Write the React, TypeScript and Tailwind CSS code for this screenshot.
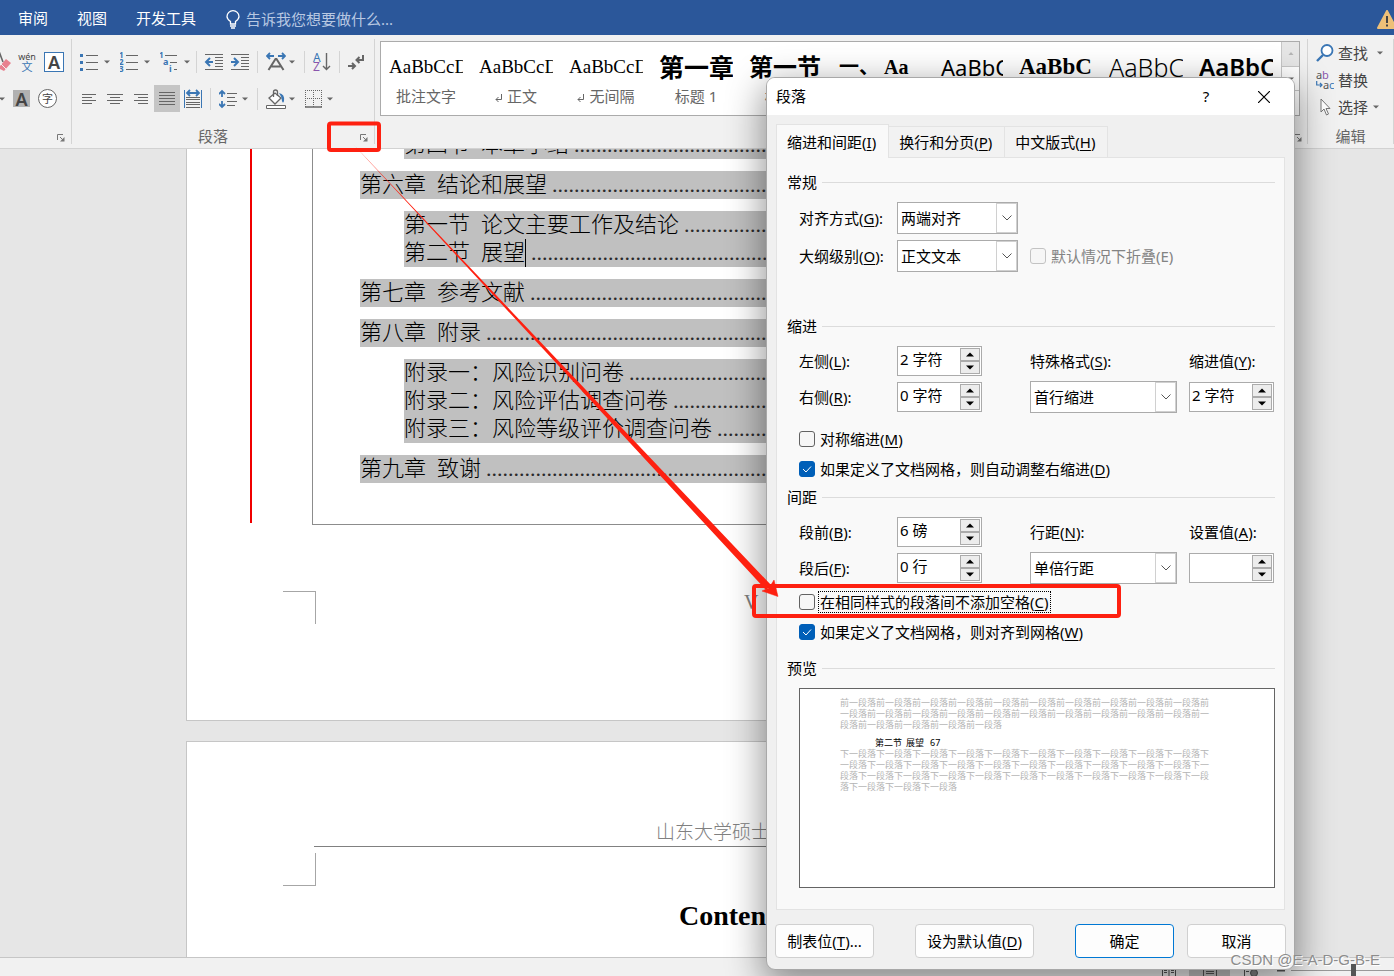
import { useState, type ReactNode } from "react";

const menuTabs = ["审阅", "视图", "开发工具"];

const serif = "font-['Liberation_Serif','Noto_Sans_CJK_SC',serif]";

const styleItems = [
  { preview: "AaBbCcDd", label: "批注文字", className: "font-['Liberation_Serif',serif] text-[19px]" },
  { preview: "AaBbCcDd", label: "正文", mark: true, className: "font-['Liberation_Serif',serif] text-[19px]" },
  { preview: "AaBbCcDd", label: "无间隔", mark: true, className: "font-['Liberation_Serif',serif] text-[19px]" },
  { preview: "第一章", label: "标题 1", className: "text-[25px] font-bold" },
  { preview: "第一节", label: "标题 2", className: "text-2xl font-bold" },
  { preview: "一、 Aa", label: "标题 3", className: "font-['Liberation_Serif','Noto_Sans_CJK_SC',serif] text-xl font-bold" },
  { preview: "AaBbCc", label: "标题 4", className: "pl-3 text-[22px]" },
  { preview: "AaBbC", label: "标题 5", className: "font-['Liberation_Serif',serif] text-[23px] font-bold" },
  { preview: "AaBbCc", label: "标题 6", className: "text-[25px] font-light" },
  { preview: "AaBbCc", label: "标题 7", className: "text-2xl font-semibold" },
];

const tocGroups = [
  { level: 2, rows: [["第四节", "本章小结"]] },
  { level: 1, rows: [["第六章", "结论和展望"]] },
  { level: 2, rows: [["第一节", "论文主要工作及结论"], ["第二节", "展望"]] },
  { level: 1, rows: [["第七章", "参考文献"]] },
  { level: 1, rows: [["第八章", "附录"]] },
  { level: 2, rows: [["", "附录一：风险识别问卷"], ["", "附录二：风险评估调查问卷"], ["", "附录三：风险等级评价调查问卷"]] },
  { level: 1, rows: [["第九章", "致谢"]] },
];

/* ---------- Ribbon pieces ---------- */

function Caret() {
  return (
    <svg className="h-2 w-2 shrink-0" viewBox="0 0 8 8">
      <path d="M1 2.5h6L4 5.5z" fill="#666" />
    </svg>
  );
}

function Separator() {
  return <span className="mx-1 h-[22px] w-px bg-[#d4d4d4]" />;
}

function ToolButton({ label, active, children }: { label: string; active?: boolean; children: ReactNode }) {
  return (
    <button
      type="button"
      aria-label={label}
      className={`flex h-[27px] w-[26px] items-center justify-center ${active ? "bg-[#c5c5c5]" : ""}`}
    >
      <svg className="h-5 w-5" viewBox="0 0 20 20" fill="none" stroke="#666" strokeWidth="1">
        {children}
      </svg>
    </button>
  );
}

function SplitButton({ label, wide, children }: { label: string; wide?: boolean; children: ReactNode }) {
  return (
    <button
      type="button"
      aria-label={label}
      className={`flex h-[27px] items-center pl-1 ${wide ? "w-10 gap-[3px]" : "w-[38px] gap-0.5"}`}
    >
      <svg className="h-5 w-5" viewBox="0 0 20 20" fill="none" stroke="#666" strokeWidth="1">
        {children}
      </svg>
      <Caret />
    </button>
  );
}

function Launcher({ label }: { label: string }) {
  return (
    <button type="button" aria-label={label} className="flex h-3 w-3 items-center justify-center">
      <svg className="h-2 w-2" viewBox="0 0 8 8" fill="none" stroke="#777">
        <path d="M.5 6V.5H6" />
        <path d="M3 3l3 3" />
        <path d="M7.5 3v4.5H3z" fill="#777" stroke="none" />
      </svg>
    </button>
  );
}

function GlyphText({ x, y, size, fill, bold, children }: { x: number; y: number; size: number; fill: string; bold?: boolean; children: string }) {
  return (
    <text x={x} y={y} fontSize={size} fill={fill} stroke="none" fontWeight={bold ? 700 : 400}>
      {children}
    </text>
  );
}

function FontGroup() {
  return (
    <div className="flex w-[72px] shrink-0 flex-col border-r border-[#d4d4d4] pt-[9px]">
      <div className="flex h-[27px] items-center">
        <button type="button" aria-label="清除格式" className="w-[14px] overflow-hidden">
          <svg className="h-5 w-[14px]" viewBox="0 0 14 20">
            <path d="M-3 12L0 2l3 8" fill="none" stroke="#666" strokeWidth="1.6" />
            <path d="M0 14l6-7 5 4-7 8-4-2z" fill="#e8818f" />
            <path d="M1 12l5 5" stroke="#f1f1f1" />
          </svg>
        </button>
        <button type="button" aria-label="拼音指南" className="flex w-[26px] flex-col items-center">
          <span className="text-[9px] leading-[9px] text-[#444]">wén</span>
          <span className="text-[11px] leading-[11px] text-[#3a76b4]">文</span>
        </button>
        <button
          type="button"
          aria-label="字符边框"
          className="ml-1 flex h-5 w-5 items-center justify-center border border-[#3a76b4] bg-white text-lg leading-none font-semibold text-[#444]"
        >
          A
        </button>
      </div>
      <div className="mt-[10px] flex h-[27px] items-center">
        <button type="button" aria-label="字体颜色" className="w-[13px]">
          <svg className="h-2 w-2" viewBox="0 0 8 8">
            <path d="M-1 2.5h6L2 5.5z" fill="#666" />
          </svg>
        </button>
        <button
          type="button"
          aria-label="字符底纹"
          className="flex h-[17px] w-[17px] items-center justify-center bg-[#b1b1b1] text-lg leading-none font-semibold text-[#444]"
        >
          A
        </button>
        <button
          type="button"
          aria-label="带圈字符"
          className="ml-2 flex h-[19px] w-[19px] items-center justify-center rounded-full border border-[#666] bg-white text-[11px] leading-none text-[#444]"
        >
          字
        </button>
      </div>
      <div className="mt-4 flex h-4 items-center justify-end pt-1 pr-1">
        <Launcher label="字体设置" />
      </div>
    </div>
  );
}

function ParagraphGroup() {
  return (
    <div className="flex w-[303px] shrink-0 flex-col border-r border-[#d4d4d4] pt-[9px] pl-1">
      <div className="flex h-[27px] items-center">
        <SplitButton label="项目符号" wide>
          <path d="M6 3.5h12M6 10.5h12M6 17.5h12" />
          <path d="M0 2h3v3H0zM0 9h3v3H0zM0 16h3v3H0z" fill="#3a76b4" stroke="none" />
        </SplitButton>
        <SplitButton label="编号" wide>
          <path d="M6 3.5h12M6 10.5h12M6 17.5h12" />
          <GlyphText x={-1} y={6} size={8} fill="#3a76b4" bold>1</GlyphText>
          <GlyphText x={-1} y={13} size={8} fill="#3a76b4" bold>2</GlyphText>
          <GlyphText x={-1} y={20} size={8} fill="#3a76b4" bold>3</GlyphText>
        </SplitButton>
        <SplitButton label="多级列表" wide>
          <path d="M5 3.5h12M10 10.5h7M14 17.5h3" />
          <GlyphText x={-1} y={6} size={8} fill="#3a76b4" bold>1</GlyphText>
          <GlyphText x={3} y={13} size={9} fill="#3a76b4" bold>a</GlyphText>
          <GlyphText x={9} y={20} size={9} fill="#3a76b4" bold>i</GlyphText>
        </SplitButton>
        <span className="mr-1 h-[22px] w-px bg-[#d4d4d4]" />
        <ToolButton label="减少缩进量">
          <path d="M1 2.5h18M11 5.5h8M11 8.5h8M11 11.5h8M11 14.5h8M1 17.5h18" />
          <path d="M9 10H3M6 6l-4 4 4 4" stroke="#3a76b4" strokeWidth="2" />
        </ToolButton>
        <ToolButton label="增加缩进量">
          <path d="M1 2.5h18M11 5.5h8M11 8.5h8M11 11.5h8M11 14.5h8M1 17.5h18" />
          <path d="M1 10h6M4 6l4 4-4 4" stroke="#3a76b4" strokeWidth="2" />
        </ToolButton>
        <Separator />
        <SplitButton label="中文版式">
          <path d="M2.500 18L9.500 7h1l7 11M5.500 14.500h9" strokeWidth="2" />
          <path d="M1 4h7M4 1L1 4l3 3M19 4h-7M16 1l3 3-3 3" stroke="#3a76b4" strokeWidth="1.800" />
        </SplitButton>
        <Separator />
        <ToolButton label="排序">
          <GlyphText x={1} y={10} size={12} fill="#3a76b4">A</GlyphText>
          <GlyphText x={1} y={19} size={12} fill="#8a56ad">Z</GlyphText>
          <path d="M14.500 1v16M11 14l3.500 3.500L18 14" strokeWidth="1.400" />
        </ToolButton>
        <Separator />
        <ToolButton label="显示编辑标记">
          <path d="M16 3v5h-6M12.500 5L9.500 8l3 3M1 14h7M5 11l3 3-3 3" strokeWidth="2" />
        </ToolButton>
      </div>
      <div className="mt-[10px] flex h-[27px] items-center">
        <ToolButton label="左对齐">
          <path d="M3 5.500h14M3 8.500h10M3 11.500h14M3 14.500h10" />
        </ToolButton>
        <ToolButton label="居中">
          <path d="M2 5.500h16M5 8.500h10M2 11.500h16M5 14.500h10" />
        </ToolButton>
        <ToolButton label="右对齐">
          <path d="M3 5.500h14M7 8.500h10M3 11.500h14M7 14.500h10" />
        </ToolButton>
        <ToolButton label="两端对齐" active>
          <path d="M2 3.500h16M2 6.500h16M2 9.500h16M2 12.500h16M2 15.500h16" />
        </ToolButton>
        <ToolButton label="分散对齐">
          <path d="M1.500 1v18M18.500 1v18" stroke="#3a76b4" />
          <path d="M3 8.500h14M3 10.500h14M3 13.500h14M3 15.500h14M3 18.500h14" />
          <path d="M4 4h12M7 1L4 4l3 3M13 1l3 3-3 3" stroke="#3a76b4" strokeWidth="1.800" />
        </ToolButton>
        <Separator />
        <SplitButton label="行和段落间距">
          <path d="M8 4.500h10M8 8.500h8M8 12.500h10M8 16.500h8" />
          <path d="M3 2v6M0 5l3-3 3 3M3 18v-6M0 15l3 3 3-3" stroke="#3a76b4" strokeWidth="1.800" />
        </SplitButton>
        <Separator />
        <SplitButton label="底纹">
          <path d="M3 9l6-5 6 5-6 6z" fill="#fff" strokeWidth="1.300" />
          <path d="M7.500 8V3q0-2 2-2t2 2v4" strokeWidth="1.300" />
          <path d="M13 4q6 1 5 8-1 3-2 0 0-4-3-8z" fill="#3a76b4" stroke="none" />
          <path d="M.5 16.500h19v3H.5z" fill="#fff" />
        </SplitButton>
        <SplitButton label="边框">
          <path d="M1.500 1v17M9.500 1v17M17.500 1v17M1 1.500h17M1 9.500h17" strokeDasharray="1 1" />
          <path d="M1 18h17" strokeWidth="1.500" />
        </SplitButton>
      </div>
      <div className="mt-4 flex h-4 items-center pr-1">
        <span className="flex-1 pr-2 text-center text-[15px] leading-4 text-[#666]">段落</span>
        <span className="pt-1"><Launcher label="段落设置" /></span>
      </div>
    </div>
  );
}

function StylesGroup() {
  return (
    <div className="flex min-w-0 flex-1 flex-col border-r border-[#d4d4d4] pt-0.5 pr-[7px] pl-[5px]">
      <div className="flex h-[75px] shrink-0 border border-[#ababab] bg-white">
        <div className="flex min-w-0 flex-1 overflow-hidden">
          {styleItems.map((item) => (
            <button key={item.label} type="button" className="flex w-[90px] shrink-0 flex-col px-2 pt-2">
              <span className={`h-9 w-full overflow-hidden text-left leading-[34px] whitespace-pre text-black ${item.className}`}>
                {item.preview}
              </span>
              <span className="flex h-5 w-full items-center justify-center gap-1 text-[15px] leading-5 text-[#666]">
                {item.mark && (
                  <svg className="mt-1 h-2 w-2" viewBox="0 0 8 8" fill="none" stroke="#666">
                    <path d="M6.500 0v5.500H1M3.500 3L1 5.500 3.500 8" />
                  </svg>
                )}
                {item.label}
              </span>
            </button>
          ))}
        </div>
        <div className="flex w-[18px] flex-col divide-y divide-[#c6c6c6] border-l border-[#c6c6c6]">
          <button type="button" aria-label="上一行" className="flex flex-1 items-center justify-center bg-[#e6e6e6]">
            <svg className="h-2 w-2" viewBox="0 0 8 8"><path d="M1.500 5h5L4 2z" fill="#b5b5b5" /></svg>
          </button>
          <button type="button" aria-label="下一行" className="flex flex-1 items-center justify-center">
            <Caret />
          </button>
          <button type="button" aria-label="其他样式" className="flex flex-1 items-center justify-center">
            <Caret />
          </button>
        </div>
      </div>
      <div className="mt-3 -mr-1 flex h-4 items-center justify-end pt-1">
        <Launcher label="样式窗格" />
      </div>
    </div>
  );
}

function EditingGroup() {
  return (
    <div className="flex w-[86px] shrink-0 flex-col border-r border-[#d4d4d4] pl-2 text-[15px] text-[#444]">
      <button type="button" className="flex h-[27px] items-center gap-1 leading-5">
        <svg className="h-[18px] w-[18px]" viewBox="0 0 18 18" fill="none" stroke="#3a76b4">
          <circle cx="11" cy="6.500" r="5.500" strokeWidth="1.800" fill="#fff" />
          <path d="M7 11l-6 6" strokeWidth="2.400" />
        </svg>
        查找
        <span className="ml-1"><Caret /></span>
      </button>
      <button type="button" className="flex h-[27px] items-center gap-1 leading-5">
        <svg className="h-[18px] w-[18px]" viewBox="0 0 18 18" fontSize="11">
          <text x="0" y="8" fill="#555">a</text>
          <text x="6" y="8" fill="#8a56ad">b</text>
          <text x="7" y="18" fill="#555">a</text>
          <text x="13" y="18" fill="#3a76b4">c</text>
          <path d="M.7 10v4H6M4 12l2 2-2 2" fill="none" stroke="#3a76b4" strokeWidth="1.200" />
        </svg>
        替换
      </button>
      <button type="button" className="flex h-[27px] items-center gap-1 leading-5">
        <svg className="h-[18px] w-[18px]" viewBox="0 0 18 18">
          <path d="M5 1v13l3-3 2.500 6 2-1-2.500-5.500h4z" fill="#fff" stroke="#777" />
        </svg>
        选择
        <Caret />
      </button>
      <div className="mt-2 h-4 pr-2 text-center leading-4 text-[#666]">编辑</div>
    </div>
  );
}

/* ---------- Document ---------- */

function TocRow({ no, title, cursor }: { no: string; title: string; cursor: boolean }) {
  return (
    <div className="flex h-7 items-center overflow-hidden whitespace-nowrap">
      {no && <span className="mr-[11px]">{no}</span>}
      <span className={cursor ? "border-r border-black" : ""}>{title}</span>
      <span className="ml-[5px] min-w-0 flex-1 overflow-hidden text-[#2a2a2a]">{".".repeat(100)}</span>
    </div>
  );
}

function DocumentArea() {
  return (
    <main className={`min-h-0 flex-1 overflow-hidden bg-[#e6e6e6] pl-[186px] ${serif}`}>
      <section className="h-[572px] w-[1094px] border border-t-0 border-[#c6c6c6] bg-white">
        <div className="flex h-[376px]">
          <div className="ml-[63px] h-[374px] w-0.5 bg-[#f00000]" />
          <div className="mr-[126px] ml-[60px] flex min-w-0 flex-1 flex-col justify-end gap-3 overflow-hidden border-b border-l border-[#8c8c8c] pb-[41px] text-[22px] leading-[30px] font-light text-black">
            {tocGroups.map((group) => (
              <div key={group.rows[0][1]} className={`bg-[#c0c0c0] ${group.level === 1 ? "ml-[47px]" : "ml-[91px]"}`}>
                {group.rows.map(([no, title]) => (
                  <TocRow key={title} no={no} title={title} cursor={title === "展望"} />
                ))}
              </div>
            ))}
          </div>
        </div>
        <div className="mt-[66px] flex items-start">
          <span className="ml-24 h-[33px] w-[33px] border-t border-r border-[#a6a6a6]" />
          <span className="ml-[428px] text-xl leading-[22px] text-[#808080]">V</span>
        </div>
      </section>
      <section className="mt-5 h-[572px] w-[1094px] border border-[#c6c6c6] bg-white pt-[78px]">
        <div className="mr-[126px] ml-[127px] border-b border-[#808080] pl-[342px] text-[19px] leading-[26px] font-light whitespace-nowrap text-[#808080]">
          山东大学硕士
        </div>
        <span className="mt-[6px] ml-24 block h-[33px] w-[33px] border-r border-b border-[#a6a6a6]" />
        <h1 className="mt-3 pl-[492px] text-[28px] leading-9 font-bold text-black">Contents</h1>
      </section>
    </main>
  );
}

/* ---------- Dialog ---------- */

// Label text followed by its underlined access key
function Keyed({ text, k, tail = "" }: { text: string; k: string; tail?: string }) {
  return (
    <>
      {text}(<span className="underline underline-offset-2">{k}</span>){tail}
    </>
  );
}

function Heading({ children, className = "" }: { children: string; className?: string }) {
  return (
    <div className={`flex h-5 items-center gap-[5px] ${className}`}>
      <h3>{children}</h3>
      <span className="h-px flex-1 bg-[#dcdcdc]" />
    </div>
  );
}

function Dropdown({ id, options, className }: { id: string; options: string[]; className: string }) {
  return (
    <div className={`flex h-8 border border-[#ababab] bg-white ${className}`}>
      <select id={id} className="min-w-0 flex-1 appearance-none bg-white pl-[3px] outline-none">
        {options.map((option) => (
          <option key={option}>{option}</option>
        ))}
      </select>
      <span className="pointer-events-none flex w-[21px] items-center justify-center border border-[#d0d0d0]">
        <svg className="h-[10px] w-[10px]" viewBox="0 0 10 10" fill="none" stroke="#555">
          <path d="M.5 2.500L5 7l4.500-4.500" />
        </svg>
      </span>
    </div>
  );
}

function Spinner({ id, value }: { id: string; value: string }) {
  return (
    <div className="flex h-[30px] w-[85px] border border-[#ababab] bg-white p-px">
      <input id={id} type="text" defaultValue={value} className="w-0 min-w-0 flex-1 bg-white pb-1 pl-px outline-none" />
      <div className="flex w-5 flex-col">
        <button type="button" aria-label="增加" className="flex flex-1 items-center justify-center border border-[#ababab] bg-[#ececec]">
          <svg className="h-[5px] w-2" viewBox="0 0 8 5"><path d="M0 4.500h8L4 .5z" fill="#000" /></svg>
        </button>
        <button type="button" aria-label="减少" className="flex flex-1 items-center justify-center border border-[#ababab] bg-[#ececec]">
          <svg className="h-[5px] w-2" viewBox="0 0 8 5"><path d="M0 .5h8L4 4.500z" fill="#000" /></svg>
        </button>
      </div>
    </div>
  );
}

function Check({ checked = false, disabled, focused, children }: { checked?: boolean; disabled?: boolean; focused?: boolean; children: ReactNode }) {
  const [on, setOn] = useState(checked);
  return (
    <label className={`flex h-5 items-center ${disabled ? "text-[#838383]" : ""}`}>
      <span className="relative flex h-4 w-4">
        <input
          type="checkbox"
          checked={on}
          disabled={disabled}
          onChange={() => setOn(!on)}
          className="h-4 w-4 appearance-none rounded-[3px] border border-[#626262] bg-[#f6f6f6] checked:border-[#005fb8] checked:bg-[#005fb8] disabled:border-[#c3c3c3]"
        />
        {on && (
          <svg className="pointer-events-none absolute inset-0 h-4 w-4" viewBox="0 0 16 16" fill="none" stroke="#fff">
            <path d="M4 8l3 3 5-5.500" />
          </svg>
        )}
      </span>
      <span className={`ml-[3px] border border-dotted px-px leading-5 ${focused ? "border-black" : "border-transparent"}`}>{children}</span>
    </label>
  );
}

const dialogTabs = [
  { text: "缩进和间距", k: "I" },
  { text: "换行和分页", k: "P" },
  { text: "中文版式", k: "H" },
];

function ParagraphDialog() {
  const [tab, setTab] = useState("I");

  return (
    <div
      role="dialog"
      aria-label="段落"
      className="absolute top-[77px] right-[99px] w-[529px] overflow-hidden rounded-[9px] border border-[#a8a8a8] bg-[#f0f0f0] pb-[11px] text-[15px] leading-5 text-black"
    >
      <div className="flex h-[37px] items-center bg-white pl-[9px]">
        <h2 className="flex-1 pb-0.5">段落</h2>
        <button type="button" aria-label="帮助" className="w-[56px] pb-0.5">?</button>
        <button type="button" aria-label="关闭" className="flex h-full w-[60px] items-center justify-center">
          <svg className="h-3 w-3" viewBox="0 0 12 12" stroke="#000" strokeWidth="1.200">
            <path d="M0 0l12 12M12 0L0 12" />
          </svg>
        </button>
      </div>

      <div className="px-[9px] pt-[9px]">
        <div role="tablist" className="flex items-end">
          {dialogTabs.map((t) => (
            <button
              key={t.k}
              type="button"
              role="tab"
              aria-selected={tab === t.k}
              onClick={() => setTab(t.k)}
              className={
                tab === t.k
                  ? "relative -mb-px h-[34px] border border-b-0 border-[#e3e3e3] bg-[#f9f9f9] pr-3 pl-[10px]"
                  : "h-[31px] border border-b-0 border-l-0 border-[#e3e3e3] bg-[#f2f2f2] pr-3 pl-[10px]"
              }
            >
              <Keyed text={t.text} k={t.k} />
            </button>
          ))}
        </div>

        <div className="border border-[#e3e3e3] bg-[#f9f9f9] pt-[14px] pr-[9px] pb-[21px] pl-[10px]">
          <Heading>常规</Heading>
          <div className="mt-[10px] flex flex-col gap-[6px] pl-3">
            <div className="flex items-center">
              <label htmlFor="align" className="w-[98px]"><Keyed text="对齐方式" k="G" tail=":" /></label>
              <Dropdown id="align" options={["两端对齐", "左对齐", "居中"]} className="w-[121px]" />
            </div>
            <div className="flex items-center">
              <label htmlFor="outline" className="w-[98px]"><Keyed text="大纲级别" k="O" tail=":" /></label>
              <Dropdown id="outline" options={["正文文本", "1 级", "2 级"]} className="mr-3 w-[121px]" />
              <Check disabled>默认情况下折叠(E)</Check>
            </div>
          </div>

          <Heading className="mt-11">缩进</Heading>
          <div className="mt-[9px] grid grid-cols-[98px_133px_159px_85px] grid-rows-[32px_32px] items-center gap-y-1 pl-3">
            <label htmlFor="left"><Keyed text="左侧" k="L" tail=":" /></label>
            <Spinner id="left" value="2 字符" />
            <label htmlFor="special"><Keyed text="特殊格式" k="S" tail=":" /></label>
            <label htmlFor="indent"><Keyed text="缩进值" k="Y" tail=":" /></label>
            <label htmlFor="right"><Keyed text="右侧" k="R" tail=":" /></label>
            <Spinner id="right" value="0 字符" />
            <Dropdown id="special" options={["首行缩进", "悬挂缩进"]} className="w-[147px]" />
            <Spinner id="indent" value="2 字符" />
          </div>
          <div className="mt-4 flex flex-col gap-[10px] pl-3">
            <Check><Keyed text="对称缩进" k="M" /></Check>
            <Check checked><Keyed text="如果定义了文档网格，则自动调整右缩进" k="D" /></Check>
          </div>

          <Heading className="mt-2">间距</Heading>
          <div className="mt-[9px] grid grid-cols-[98px_133px_159px_85px] grid-rows-[32px_32px] items-center gap-y-1 pl-3">
            <label htmlFor="before"><Keyed text="段前" k="B" tail=":" /></label>
            <Spinner id="before" value="6 磅" />
            <label htmlFor="spacing"><Keyed text="行距" k="N" tail=":" /></label>
            <label htmlFor="at"><Keyed text="设置值" k="A" tail=":" /></label>
            <label htmlFor="after"><Keyed text="段后" k="F" tail=":" /></label>
            <Spinner id="after" value="0 行" />
            <Dropdown id="spacing" options={["单倍行距", "1.5 倍行距"]} className="w-[147px]" />
            <Spinner id="at" value="" />
          </div>
          <div className="mt-2 flex flex-col gap-[10px] pl-3">
            <Check focused><Keyed text="在相同样式的段落间不添加空格" k="C" /></Check>
            <Check checked><Keyed text="如果定义了文档网格，则对齐到网格" k="W" /></Check>
          </div>

          <Heading className="mt-4">预览</Heading>
          <div className="mt-[10px] ml-3 h-[200px] border border-[#646464] bg-white pt-2 pl-10 text-[9px] leading-[11px] text-[#b4b4b4]">
            <p className="w-[371px] break-all">{"前一段落".repeat(25)}</p>
            <p className="mt-[7px] flex gap-1 pl-[35px] text-black">
              <span>第二节</span>
              <span>展望</span>
              <span className="ml-0.5">67</span>
            </p>
            <p className="w-[371px] break-all">{"下一段落".repeat(34)}</p>
          </div>
        </div>

        <div className="mt-[14px] -mr-px -ml-px flex">
          <button type="button" className="h-[34px] w-[99px] rounded border border-[#d0d0d0] bg-[#fdfdfd]">
            <Keyed text="制表位" k="T" tail="..." />
          </button>
          <button type="button" className="ml-[41px] h-[34px] w-[119px] rounded border border-[#d0d0d0] bg-[#fdfdfd]">
            <Keyed text="设为默认值" k="D" />
          </button>
          <button type="button" className="ml-auto h-[34px] w-[99px] rounded border border-[#0078d4] bg-[#fdfdfd]">确定</button>
          <button type="button" className="ml-[13px] h-[34px] w-[99px] rounded border border-[#d0d0d0] bg-[#fdfdfd]">取消</button>
        </div>
      </div>
    </div>
  );
}

/* Red call-outs that link the launcher to the check box */
function Annotations() {
  return (
    <svg className="pointer-events-none absolute top-0 left-0 h-[700px] w-[1200px]" fill="none" stroke="#fe2010">
      <rect x="329" y="123.500" width="50" height="26.500" rx="2" strokeWidth="4" />
      <rect x="754" y="586" width="365" height="30" rx="2" strokeWidth="4" />
      <path d="M353 144L541 342.500 621.500 427.500 771 585 766 590 618.500 430.500 539 344.500z" fill="#fe2010" stroke="none" />
      <path d="M778 596.500L762 591l7-3 5-8z" fill="#fe2010" stroke="#fe2010" strokeWidth="0.500" />
    </svg>
  );
}

export default function App() {
  return (
    <div className="relative flex h-screen flex-col overflow-hidden bg-[#f1f1f1] font-['Noto_Sans','Noto_Sans_CJK_SC',sans-serif]">
      <header className="flex h-[35px] shrink-0 items-center overflow-hidden bg-[#2b579a] pl-[18px] text-[15px] leading-5 text-white">
        <nav className="flex gap-[29px]">
          {menuTabs.map((name) => (
            <button key={name} type="button">{name}</button>
          ))}
        </nav>
        <label className="ml-[30px] flex flex-1 items-center gap-[6px]">
          <svg className="mt-1 h-[19px] w-[14px]" viewBox="0 0 14 19" fill="none" stroke="#fff" strokeWidth="1.300">
            <path d="M4.500 14v-2.500Q1 9 1 6.500A6 5.800 0 0 1 13 6.500Q13 9 9.500 11.500V14z" />
            <path d="M4 16h6M5 18h4" />
          </svg>
          <input
            type="text"
            aria-label="操作说明搜索"
            placeholder="告诉我您想要做什么..."
            className="mt-0.5 w-[200px] bg-transparent outline-none placeholder:text-[#b8c8e2]"
          />
        </label>
        <svg className="mt-1 -mr-[3px] h-5 w-5" viewBox="0 0 20 20">
          <path d="M10 1L19 18H1z" fill="#eec078" stroke="#eec078" strokeLinejoin="round" strokeWidth="2" />
          <path d="M10 6v7M10 14.500v2" stroke="#444" strokeWidth="2" />
        </svg>
      </header>

      <div className="flex h-[114px] shrink-0 border-b border-[#d2d2d2] py-1">
        <FontGroup />
        <ParagraphGroup />
        <StylesGroup />
        <EditingGroup />
      </div>

      <DocumentArea />

      <footer className="flex h-[19px] shrink-0 items-start justify-end overflow-hidden border-t border-[#c6c6c6] bg-[#f1f1f1]">
        <button type="button" aria-label="阅读视图" className="flex w-[41px] justify-center pt-2">
          <svg className="h-3 w-[14px]" viewBox="0 0 14 12" fill="none" stroke="#555">
            <path d="M.5 1.500h5l1.500 1 1.500-1h5v9h-5L7 12l-1.500-1.500h-5zM7 2v10M2 4.500h3M2 6.500h3M9 4.500h3M9 6.500h3" />
          </svg>
        </button>
        <button type="button" aria-label="页面视图" className="flex h-[19px] w-[41px] justify-center bg-[#c5c5c5] pt-2">
          <svg className="h-3 w-[14px]" viewBox="0 0 14 12" fill="none" stroke="#555">
            <path d="M.5.5h13v11H.5zM3 3.500h8M3 5.500h8M3 7.500h8" />
          </svg>
        </button>
        <button type="button" aria-label="Web 版式" className="flex w-[41px] justify-center pt-2">
          <svg className="h-3 w-[14px]" viewBox="0 0 14 12" fill="none" stroke="#555">
            <path d="M7 .5H.5v11H7M2 3.500h4M2 5.500h3" />
            <circle cx="10" cy="7" r="3.500" fill="#888" />
          </svg>
        </button>
        <svg className="h-[19px] w-[123px]" viewBox="0 0 123 19">
          <path d="M6 12.500h8" stroke="#555" strokeWidth="2" />
          <path d="M20 12.500h103" stroke="#999" />
          <path d="M80 6h5v13h-5z" fill="#555" />
        </svg>
      </footer>

      {/* soft shadow sits under the dialog frame */}
      <div className="absolute top-[77px] right-[100px] h-[893px] w-[527px] rounded-[9px] shadow-[0_12px_36px_4px_rgba(0,0,0,0.42)]" />
      <ParagraphDialog />
      <Annotations />
      <div className="pointer-events-none absolute right-[14px] bottom-[5px] font-['Liberation_Sans',sans-serif] text-[15px] leading-[22px] text-[#8c8c8c] [text-shadow:1px_1px_0_#fff]">
        CSDN @E-A-D-G-B-E
      </div>
    </div>
  );
}
